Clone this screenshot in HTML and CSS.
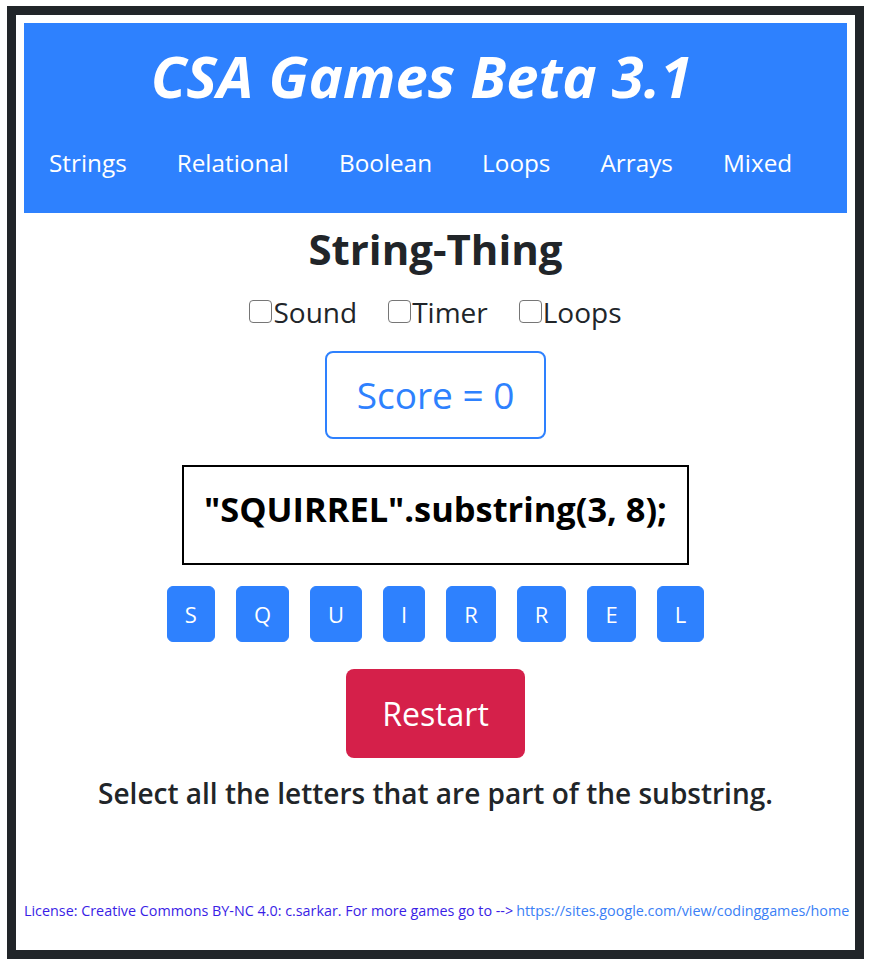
FILE: index.html
```html
<!DOCTYPE html>
<html lang="en">
<head>
<meta charset="utf-8">
<title>CSA Games Beta 3.1</title>
<link rel="stylesheet" href="styles.css">
</head>
<body>
<div class="frame">
  <header class="banner">
    <h1 class="brand">CSA Games Beta 3.1</h1>
    <nav class="nav">
      <a class="nav-link" href="#">Strings</a>
      <a class="nav-link" href="#">Relational</a>
      <a class="nav-link" href="#">Boolean</a>
      <a class="nav-link" href="#">Loops</a>
      <a class="nav-link" href="#">Arrays</a>
      <a class="nav-link" href="#">Mixed</a>
    </nav>
  </header>
  <main class="game">
    <h2 class="title">String-Thing</h2>
    <div class="options">
      <label class="opt"><input class="check" type="checkbox">Sound</label>
      <label class="opt"><input class="check" type="checkbox">Timer</label>
      <label class="opt"><input class="check" type="checkbox">Loops</label>
    </div>
    <div class="score">Score = 0</div>
    <div class="expr">"SQUIRREL".substring(3, 8);</div>
    <div class="letters">
      <button class="letter">S</button>
      <button class="letter">Q</button>
      <button class="letter">U</button>
      <button class="letter">I</button>
      <button class="letter">R</button>
      <button class="letter">R</button>
      <button class="letter">E</button>
      <button class="letter">L</button>
    </div>
    <button class="restart">Restart</button>
    <p class="hint">Select all the letters that are part of the substring.</p>
  </main>
  <footer class="license">License: Creative Commons BY-NC 4.0: c.sarkar. For more games go to --&gt;<a class="site" href="#">https://sites.google.com/view/codinggames/home</a></footer>
</div>
</body>
</html>
```

FILE: styles.css
```css
* { box-sizing: border-box; }
html, body { margin: 0; padding: 0; background: #fff; }
body {
  font-family: "Open Sans", "Noto Sans", sans-serif;
  color: #212529;
}
.frame {
  margin: 6px 7px 8px;
  height: 953px;
  border: 9px solid #212529;
  padding: 8px;
  display: flex;
  flex-direction: column;
}
.banner {
  background: #2e81fe;
  color: #fff;
  padding: 18px 0 32px;
}
.brand {
  margin: 0;
  font-size: 58px;
  font-weight: 700;
  font-style: italic;
  line-height: 1.2;
  text-align: center;
  padding-right: 28px;
}
.nav {
  display: flex;
  margin-top: 34px;
}
.nav-link {
  color: #fff;
  text-decoration: none;
  font-size: 24.3px;
  line-height: 36px;
  padding: 0 25px;
}
.game {
  display: flex;
  flex-direction: column;
  align-items: center;
}
.title {
  margin: 12px 0 0;
  font-size: 42px;
  font-weight: 700;
  line-height: 48px;
}
.options {
  display: flex;
  gap: 31px;
  margin-top: 18px;
  font-size: 28px;
  line-height: 42px;
}
.opt { display: flex; align-items: center; }
.check {
  appearance: none;
  -webkit-appearance: none;
  width: 23px;
  height: 23px;
  margin: 0 1px 0 0;
  border: 1px solid #767676;
  border-radius: 4px;
  background: #fff;
}
.score {
  margin-top: 18px;
  border: 2px solid #2e81fe;
  border-radius: 8px;
  color: #2e81fe;
  font-size: 37px;
  line-height: 54px;
  padding: 15px 30px;
}
.expr {
  margin-top: 26px;
  border: 2px solid #000;
  color: #000;
  font-size: 34.4px;
  font-weight: 700;
  line-height: 54px;
  padding: 15px 20px 27px;
}
.letters {
  display: flex;
  gap: 21px;
  margin-top: 21px;
}
.letter {
  height: 56px;
  padding: 0 17px;
  border: 1px solid #2e81fe;
  border-radius: 6px;
  background: #2e81fe;
  color: #fff;
  font-family: inherit;
  font-size: 22px;
}
.restart {
  margin-top: 27px;
  width: 179px;
  height: 89px;
  border: none;
  border-radius: 8px;
  background: #d5204a;
  color: #fff;
  font-family: inherit;
  font-size: 32px;
}
.hint {
  margin: 15px 0 0;
  font-size: 28px;
  font-weight: 600;
  line-height: 40px;
}
.license {
  margin-top: auto;
  padding-bottom: 22px;
  text-align: center;
  white-space: nowrap;
  font-size: 14.35px;
  color: #3a1ee6;
}
.site {
  margin-left: 3px;
  color: #3b7ff6;
  text-decoration: none;
}
```
